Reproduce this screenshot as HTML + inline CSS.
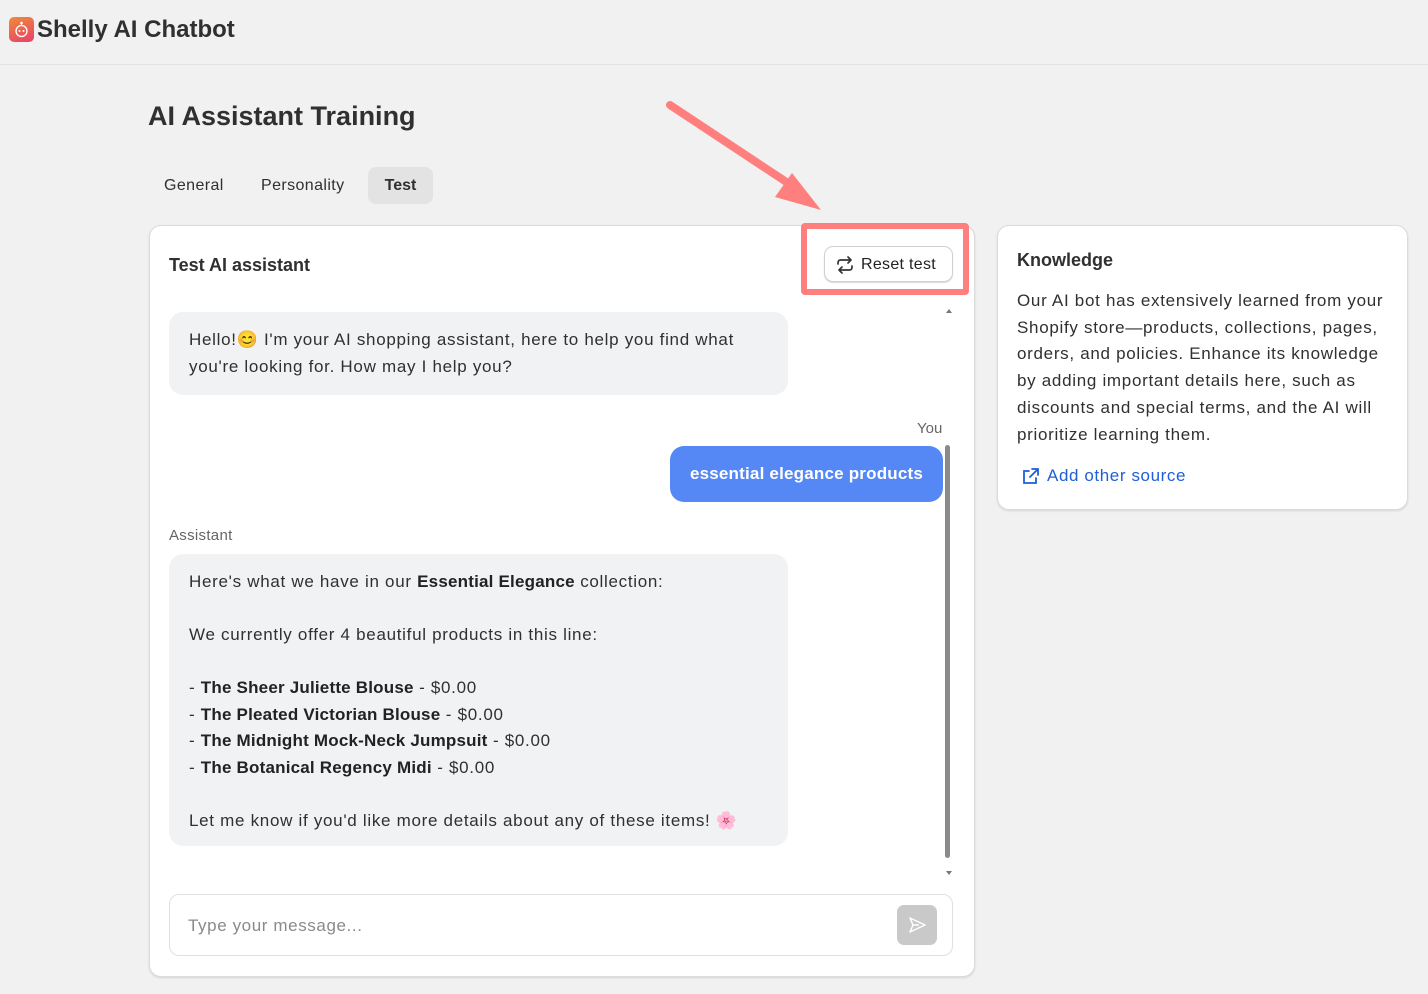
<!DOCTYPE html>
<html><head><meta charset="utf-8"><style>
*{box-sizing:border-box;margin:0;padding:0}
body{width:1428px;height:994px;background:#f1f1f1;font-family:"Liberation Sans",sans-serif;color:#303030;position:relative;overflow:hidden}
.abs{position:absolute}
.card{background:#fff;border:1px solid #dcdcdc;border-radius:12px;box-shadow:0 1px 2px rgba(0,0,0,.12)}
.txt{font-size:17px;line-height:26.5px;letter-spacing:.7px}
b{font-weight:700;color:#222;letter-spacing:.2px}
</style></head><body>
<div class="abs" style="left:0;top:64px;width:1428px;height:1px;background:#e4e4e4"></div>
<div class="abs" style="left:9px;top:17px;width:25px;height:25px;border-radius:5px;background:linear-gradient(160deg,#f08a3a,#e8406a)">
<svg width="25" height="25" viewBox="0 0 25 25"><circle cx="12.5" cy="6" r="1.3" fill="#fff"/><path d="M12.5 7v2" stroke="#fff"/><circle cx="12.5" cy="14" r="5.5" fill="none" stroke="#fff" stroke-width="1.3"/><circle cx="10.5" cy="14" r="1" fill="#fff"/><circle cx="14.5" cy="14" r="1" fill="#fff"/></svg></div>
<div class="abs" style="left:37px;top:16px;font-size:24px;font-weight:700;color:#303030">Shelly AI Chatbot</div>
<div class="abs" style="left:148px;top:101px;font-size:27px;font-weight:700;color:#303030">AI Assistant Training</div>
<div class="abs" style="left:164px;top:177px;font-size:16px;color:#303030;letter-spacing:.4px">General</div>
<div class="abs" style="left:261px;top:177px;font-size:16px;color:#303030;letter-spacing:.4px">Personality</div>
<div class="abs" style="left:368px;top:167px;width:65px;height:37px;border-radius:8px;background:#e3e3e3;font-size:16px;font-weight:700;text-align:center;line-height:37px">Test</div>

<div class="abs card" style="left:149px;top:225px;width:826px;height:752px"></div>
<div class="abs" style="left:169px;top:255px;font-size:18px;font-weight:700">Test AI assistant</div>
<div class="abs" style="left:824px;top:246px;width:129px;height:36px;border:1px solid #d0d0d0;border-radius:9px;box-shadow:0 1px 1px rgba(0,0,0,.15);background:#fff;font-size:16px;line-height:35px;padding-left:36px;color:#222;letter-spacing:.3px">Reset test
<svg class="abs" style="left:10px;top:8px" width="20" height="20" viewBox="0 0 20 20" fill="none" stroke="#333" stroke-width="1.7" stroke-linecap="round" stroke-linejoin="round"><path d="M3 9V7.5A2.5 2.5 0 0 1 5.5 5H16M13 2l3 3-3 3"/><path d="M17 11v1.5A2.5 2.5 0 0 1 14.5 15H4M7 18l-3-3 3-3"/></svg></div>
<div class="abs" style="left:801px;top:223px;width:168px;height:72px;border:6px solid #ff7f7f;border-radius:4px"></div>
<svg class="abs" style="left:660px;top:95px" width="180" height="130"><path d="M10 10L140 96" stroke="#ff7f7f" stroke-width="8" stroke-linecap="round"/><path d="M115 102L161 115L132 78Z" fill="#ff7f7f"/></svg>

<div class="abs" style="left:946px;top:306px;width:0;height:0;border:3px solid transparent;border-bottom:4px solid #777"></div>
<div class="abs" style="left:945px;top:445px;width:5px;height:413px;background:#8a8a8a;border-radius:3px"></div>
<div class="abs" style="left:946px;top:871px;width:0;height:0;border:3px solid transparent;border-top:4px solid #777"></div>

<div class="abs txt" style="left:169px;top:312px;width:619px;height:83px;background:#f1f2f4;border-radius:14px;padding:15px 20px">Hello!😊 I'm your AI shopping assistant, here to help you find what you're looking for. How may I help you?</div>
<div class="abs" style="left:917px;top:420px;font-size:15px;color:#666">You</div>
<div class="abs" style="left:670px;top:446px;width:273px;height:56px;background:#5588f5;border-radius:14px;color:#fff;font-size:17px;font-weight:700;line-height:56px;text-align:center;letter-spacing:.2px">essential elegance products</div>
<div class="abs" style="left:169px;top:527px;font-size:15px;color:#666;letter-spacing:.3px">Assistant</div>
<div class="abs txt" style="left:169px;top:554px;width:619px;height:292px;background:#f1f2f4;border-radius:14px;padding:15px 20px">Here's what we have in our <b>Essential Elegance</b> collection:<br><br>We currently offer 4 beautiful products in this line:<br><br>- <b>The Sheer Juliette Blouse</b> - $0.00<br>- <b>The Pleated Victorian Blouse</b> - $0.00<br>- <b>The Midnight Mock-Neck Jumpsuit</b> - $0.00<br>- <b>The Botanical Regency Midi</b> - $0.00<br><br>Let me know if you'd like more details about any of these items! 🌸</div>

<div class="abs" style="left:169px;top:894px;width:784px;height:62px;border:1px solid #e0e0e0;border-radius:10px;font-size:17px;color:#8a8a8a;line-height:61px;padding-left:18px;letter-spacing:.6px">Type your message...</div>
<div class="abs" style="left:897px;top:905px;width:40px;height:40px;border-radius:7px;background:#c9c9c9">
<svg width="40" height="40" viewBox="0 0 40 40" fill="none" stroke="#fff" stroke-width="1.5" stroke-linejoin="round"><path d="M13 13L28 20L13 27L16 20Z M16 20H22"/></svg></div>

<div class="abs card" style="left:997px;top:225px;width:411px;height:285px"></div>
<div class="abs" style="left:1017px;top:250px;font-size:18px;font-weight:700">Knowledge</div>
<div class="abs" style="left:1017px;top:288px;width:378px;font-size:17px;line-height:26.7px;color:#303030;letter-spacing:.7px">Our AI bot has extensively learned from your Shopify store—products, collections, pages, orders, and policies. Enhance its knowledge by adding important details here, such as discounts and special terms, and the AI will prioritize learning them.</div>
<svg class="abs" style="left:1020px;top:467px" width="20" height="20" viewBox="0 0 20 20" fill="none" stroke="#1f5fd6" stroke-width="1.8" stroke-linecap="round"><path d="M9 4H4v12h12v-5M12 2h6v6M18 2l-8 8"/></svg>
<div class="abs" style="left:1047px;top:466px;font-size:17px;color:#1f5fd6;letter-spacing:.6px">Add other source</div>
</body></html>
